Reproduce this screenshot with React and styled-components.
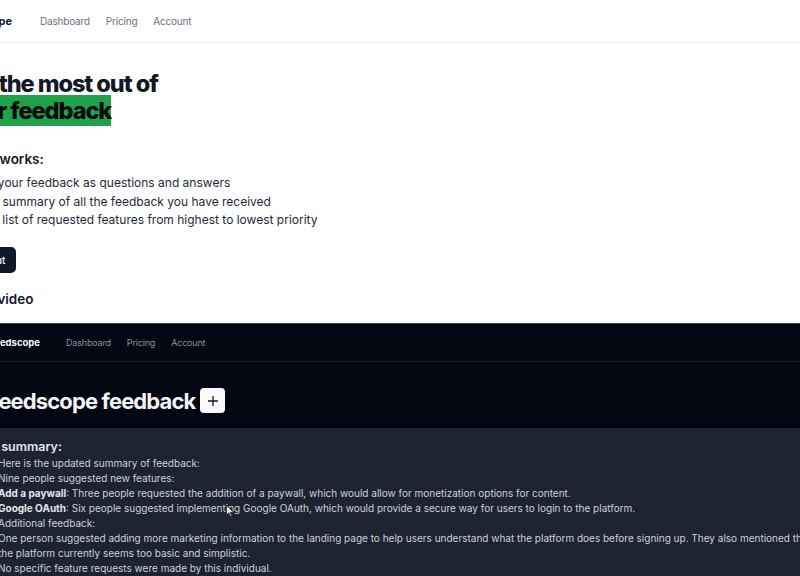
import React from 'react'
import styled, { createGlobalStyle } from 'styled-components'

const GlobalStyle = createGlobalStyle`
  html, body {
    margin: 0;
    padding: 0;
    background: #fff;
    overflow: hidden;
  }
  body {
    font-family: Inter, "Noto Sans", sans-serif;
    -webkit-font-smoothing: antialiased;
  }
`

const Page = styled.div`
  width: 800px;
  height: 576px;
  overflow: hidden;
  display: flex;
  flex-direction: column;
`

const TopNav = styled.nav`
  height: 42px;
  flex-shrink: 0;
  display: flex;
  align-items: center;
  gap: 16px;
  border-bottom: 1px solid #eef0f2;
`

const Logo = styled.span`
  font-size: ${p => p.$size}px;
  font-weight: 700;
  color: ${p => p.$color};
  margin-left: ${p => p.$pull}px;
  margin-right: ${p => p.$after}px;
  white-space: nowrap;
`

const NavLink = styled.a`
  font-size: ${p => p.$size}px;
  letter-spacing: -0.02em;
  color: ${p => p.$color};
  text-decoration: none;
  white-space: nowrap;
`

const Hero = styled.section`
  display: flex;
  flex-direction: column;
  align-items: flex-start;
  flex-shrink: 0;
`

const Title = styled.h1`
  margin: 27px 0 0 ${p => p.$pull}px;
  font-size: 23.5px;
  font-weight: 800;
  letter-spacing: -0.045em;
  line-height: 27px;
  color: #111827;
  white-space: nowrap;
`

const Mark = styled.span`
  background: #1fa34a;
  color: #070b0d;
  padding: 1px 0;
`

const SubHeading = styled.h2`
  margin: ${p => p.$top}px 0 0 ${p => p.$pull}px;
  font-size: 13.5px;
  font-weight: 600;
  line-height: 20px;
  color: #111827;
  white-space: nowrap;
`

const Steps = styled.ol`
  list-style: none;
  margin: 5px 0 0 ${p => p.$pull}px;
  padding: 0;
`

const Step = styled.li`
  font-size: 12px;
  line-height: 18.5px;
  color: #1f2937;
  white-space: nowrap;
`

const Button = styled.button`
  margin: 17px 0 0 ${p => p.$pull}px;
  height: 26px;
  padding: 0 11px;
  border: none;
  border-radius: 5px;
  background: #111827;
  color: #fff;
  font-family: inherit;
  font-size: 10px;
  font-weight: 500;
  white-space: nowrap;
`

const Video = styled.section`
  position: relative;
  flex: 1;
  margin-top: 14px;
  background: #030712;
  border-top: 1px solid #3b3f46;
  display: flex;
  flex-direction: column;
`

const DarkNav = styled.nav`
  height: 37px;
  flex-shrink: 0;
  display: flex;
  align-items: center;
  gap: 16px;
  border-bottom: 1px solid #1a1f29;
`

const TitleRow = styled.div`
  height: 66px;
  box-sizing: border-box;
  padding-top: 12px;
  flex-shrink: 0;
  display: flex;
  align-items: center;
  gap: 5px;
`

const DarkTitle = styled.h2`
  margin: 0 0 0 ${p => p.$pull}px;
  font-size: 22px;
  font-weight: 700;
  letter-spacing: -0.04em;
  color: #f3f4f6;
  white-space: nowrap;
`

const AddButton = styled.button`
  width: 25px;
  height: 25px;
  padding: 0;
  border: none;
  border-radius: 4px;
  background: #fafafa;
  display: flex;
  align-items: center;
  justify-content: center;
`

const Summary = styled.div`
  flex: 1;
  background: #1d2331;
  padding-top: 10px;
`

const SummaryHeading = styled.h3`
  margin: 0 0 0 ${p => p.$pull}px;
  font-size: 12.5px;
  font-weight: 600;
  line-height: 18px;
  color: #e5e7eb;
  white-space: nowrap;
`

const Line = styled.p`
  margin: 0 0 0 -2px;
  font-size: 10px;
  line-height: 15px;
  color: #cdd2da;
  white-space: nowrap;
  b {
    font-weight: 700;
    color: #e5e7eb;
  }
`

const Cursor = styled.svg`
  position: absolute;
  left: 226px;
  top: 181px;
`

const links = ['Dashboard', 'Pricing', 'Account']

export default function App() {
  return (
    <Page>
      <GlobalStyle />
      <TopNav>
        <Logo $size={11} $color="#111827" $pull={-47} $after={12}>Feedscope</Logo>
        {links.map(l => (
          <NavLink key={l} $size={10} $color="#6b7280">{l}</NavLink>
        ))}
      </TopNav>

      <Hero>
        <Title $pull={-43}>
          Get the most out of
          <br />
          <Mark>your feedback</Mark>
        </Title>
        <SubHeading $top={25} $pull={-45}>How it works:</SubHeading>
        <Steps $pull={-45}>
          <Step>1. View your feedback as questions and answers</Step>
          <Step>2. Get a summary of all the feedback you have received</Step>
          <Step>3. Get a list of requested features from highest to lowest priority</Step>
        </Steps>
        <Button $pull={-48}>Try it out</Button>
        <SubHeading $top={16} $pull={-72}>Watch the video</SubHeading>
      </Hero>

      <Video>
        <DarkNav>
          <Logo $size={9.5} $color="#f9fafb" $pull={-11} $after={10}>Feedscope</Logo>
          {links.map(l => (
            <NavLink key={l} $size={9} $color="#8b929e">{l}</NavLink>
          ))}
        </DarkNav>
        <TitleRow>
          <DarkTitle $pull={-13}>Feedscope feedback</DarkTitle>
          <AddButton aria-label="Add">
            <svg width="12" height="12" viewBox="0 0 12 12" fill="none" stroke="#111827" strokeWidth="1.3">
              <path d="M6 1v10M1 6h10" />
            </svg>
          </AddButton>
        </TitleRow>
        <Summary>
          <SummaryHeading $pull={-61}>Feedback summary:</SummaryHeading>
          <Line>Here is the updated summary of feedback:</Line>
          <Line>Nine people suggested new features:</Line>
          <Line><b>Add a paywall</b>: Three people requested the addition of a paywall, which would allow for monetization options for content.</Line>
          <Line><b>Google OAuth</b>: Six people suggested implementing Google OAuth, which would provide a secure way for users to login to the platform.</Line>
          <Line>Additional feedback:</Line>
          <Line>One person suggested adding more marketing information to the landing page to help users understand what the platform does before signing up. They also mentioned that</Line>
          <Line>the platform currently seems too basic and simplistic.</Line>
          <Line>No specific feature requests were made by this individual.</Line>
        </Summary>
        <Cursor width="8" height="12" viewBox="0 0 8 12">
          <path d="M0.5 0.5v9.5l2.4-2.2 1.6 3.6 1.3-0.6-1.6-3.5h3.3z" fill="#f3f4f6" stroke="#1d2331" strokeWidth="0.8" />
        </Cursor>
      </Video>
    </Page>
  )
}
